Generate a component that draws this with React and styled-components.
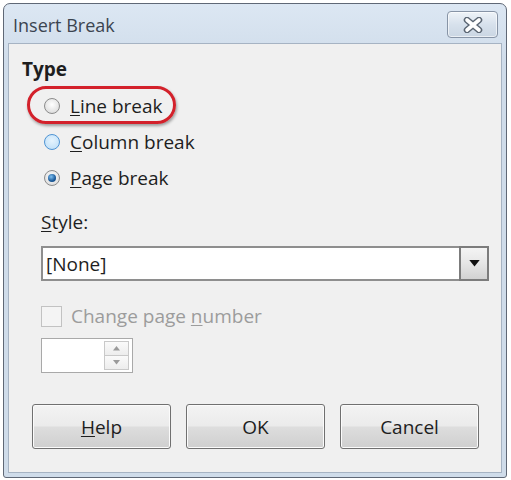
import React from 'react'
import styled, { createGlobalStyle } from 'styled-components'

const Global = createGlobalStyle`
  body {
    margin: 0;
    background: #ffffff;
    font-family: 'Open Sans', 'Noto Sans', sans-serif;
  }
`

const Window = styled.div`
  margin: 3px 0 0 3px;
  width: 504px;
  height: 475px;
  box-sizing: border-box;
  border: 1px solid #5f6876;
  border-radius: 7px 7px 3px 3px;
  background: linear-gradient(#dce7f3, #cfdcea 60px, #cfdcea);
  padding: 0 4px 4px;
  display: flex;
  flex-direction: column;
`

const TitleBar = styled.div`
  height: 39px;
  display: flex;
  align-items: center;
  justify-content: space-between;
  padding: 0 4px 0 5px;
`

const Title = styled.span`
  font-size: 18px;
  color: #3b4450;
  margin-top: 2px;
`

const CloseButton = styled.div`
  width: 49px;
  height: 25px;
  margin-top: 2px;
  border: 1px solid #8794a6;
  border-radius: 4px;
  background: linear-gradient(#eef3f8, #d7e1ec 50%, #cad6e3);
  box-shadow: inset 0 0 0 1px rgba(255, 255, 255, 0.6);
  display: flex;
  align-items: center;
  justify-content: center;
`

const Body = styled.div`
  flex: 1;
  background: #f0f0f0;
  border: 1px solid #a6b3c3;
  padding: 14px 12px 0 13px;
  display: flex;
  flex-direction: column;
  font-size: 19px;
  color: #1e1e1e;
`

const Heading = styled.div`
  font-weight: 700;
  line-height: 22px;
`

const RadioList = styled.div`
  margin-top: 8px;
  padding-left: 22px;
  display: flex;
  flex-direction: column;
`

const RadioRow = styled.div`
  position: relative;
  height: 36px;
  display: flex;
  align-items: center;
  gap: 10px;
`

const Highlight = styled.div`
  position: absolute;
  left: -17px;
  top: -2px;
  width: 149px;
  height: 38px;
  box-sizing: border-box;
  border: 3px solid #d3212b;
  border-radius: 19px;
  box-shadow: 1px 2px 3px rgba(0, 0, 0, 0.35);
  pointer-events: none;
`

const Radio = styled.span`
  width: 16px;
  height: 16px;
  box-sizing: border-box;
  border-radius: 50%;
  border: 1px solid ${p => (p.hover ? '#4f94d4' : '#8b8b8b')};
  background: ${p =>
    p.hover
      ? 'radial-gradient(circle at 50% 40%, #e6f4fe, #b9dcf7)'
      : 'radial-gradient(circle at 50% 40%, #ffffff, #d4d4d4)'};
  display: flex;
  align-items: center;
  justify-content: center;
  &::after {
    content: '';
    display: ${p => (p.checked ? 'block' : 'none')};
    width: 8px;
    height: 8px;
    border-radius: 50%;
    background: radial-gradient(circle at 40% 35%, #7fc0f0, #1b5a9a 60%, #0c3a6a);
  }
`

const Key = styled.span`
  text-decoration: underline;
  text-underline-offset: 2px;
`

const Section = styled.div`
  padding-left: 19px;
  display: flex;
  flex-direction: column;
`

const Label = styled.div`
  margin-top: 15px;
  line-height: 22px;
`

const Select = styled.div`
  margin-top: 13px;
  height: 35px;
  box-sizing: border-box;
  border: 2px solid #8e8e8e;
  border-right-width: 1px;
  background: #ffffff;
  display: flex;
  align-items: stretch;
`

const SelectValue = styled.div`
  flex: 1;
  padding-left: 3px;
  display: flex;
  align-items: center;
`

const DropButton = styled.div`
  width: 26px;
  border: 2px solid #7c7c7c;
  margin: -2px -1px -2px 0;
  background: linear-gradient(#f4f4f4, #e6e6e6 50%, #d2d2d2);
  display: flex;
  align-items: center;
  justify-content: center;
`

const CheckRow = styled.div`
  margin-top: 24px;
  height: 22px;
  display: flex;
  align-items: center;
  gap: 9px;
  color: #9c9c9c;
`

const Checkbox = styled.span`
  width: 21px;
  height: 21px;
  box-sizing: border-box;
  border: 1px solid #c2c2c2;
  background: #f4f4f4;
`

const Spin = styled.div`
  margin-top: 11px;
  width: 92px;
  height: 35px;
  box-sizing: border-box;
  border: 1px solid #a9a9a9;
  background: #ffffff;
  display: flex;
  justify-content: flex-end;
  padding: 2px 3px 2px 0;
`

const SpinButtons = styled.div`
  width: 23px;
  border: 1px solid #c9c9c9;
  display: flex;
  flex-direction: column;
`

const SpinHalf = styled.div`
  flex: 1;
  background: linear-gradient(#fafafa, #ededed);
  display: flex;
  align-items: center;
  justify-content: center;
  & + & {
    border-top: 1px solid #c9c9c9;
  }
`

const Buttons = styled.div`
  margin-top: 31px;
  padding: 0 10px;
  display: grid;
  grid-template-columns: repeat(3, 1fr);
  gap: 15px;
`

const Button = styled.div`
  height: 45px;
  box-sizing: border-box;
  border: 1px solid #707070;
  border-radius: 3px;
  background: linear-gradient(#f3f3f3, #ebebeb 48%, #dddddd 52%, #cfcfcf);
  box-shadow: inset 0 0 0 1px #fbfbfb;
  display: flex;
  align-items: center;
  justify-content: center;
  color: #1e1e1e;
`

const CloseIcon = () => (
  <svg width="22" height="16" viewBox="0 0 22 16">
    <path d="M5 3 L17 13 M17 3 L5 13" stroke="#5a6572" strokeWidth="6.5" strokeLinecap="round" />
    <path d="M5 3 L17 13 M17 3 L5 13" stroke="#ffffff" strokeWidth="3.6" strokeLinecap="round" />
  </svg>
)

const Arrow = ({ up, size = 8, color = '#7a7a7a' }) => (
  <svg width={size} height={size / 2 + 1} viewBox="0 0 8 5">
    <path d={up ? 'M0 5 L4 0 L8 5 Z' : 'M0 0 L8 0 L4 5 Z'} fill={color} />
  </svg>
)

export default function App() {
  return (
    <>
      <Global />
      <Window>
        <TitleBar>
          <Title>Insert Break</Title>
          <CloseButton>
            <CloseIcon />
          </CloseButton>
        </TitleBar>
        <Body>
          <Heading>Type</Heading>
          <RadioList>
            <RadioRow>
              <Radio />
              <span>
                <Key>L</Key>ine break
              </span>
              <Highlight />
            </RadioRow>
            <RadioRow>
              <Radio hover />
              <span>
                <Key>C</Key>olumn break
              </span>
            </RadioRow>
            <RadioRow>
              <Radio checked />
              <span>
                <Key>P</Key>age break
              </span>
            </RadioRow>
          </RadioList>
          <Section>
            <Label>
              <Key>S</Key>tyle:
            </Label>
            <Select>
              <SelectValue>[None]</SelectValue>
              <DropButton>
                <Arrow size={11} color="#111111" />
              </DropButton>
            </Select>
            <CheckRow>
              <Checkbox />
              <span>
                Change page <Key>n</Key>umber
              </span>
            </CheckRow>
            <Spin>
              <SpinButtons>
                <SpinHalf>
                  <Arrow up size={7} color="#9a9a9a" />
                </SpinHalf>
                <SpinHalf>
                  <Arrow size={7} color="#9a9a9a" />
                </SpinHalf>
              </SpinButtons>
            </Spin>
          </Section>
          <Buttons>
            <Button>
              <span>
                <Key>H</Key>elp
              </span>
            </Button>
            <Button>OK</Button>
            <Button>Cancel</Button>
          </Buttons>
        </Body>
      </Window>
    </>
  )
}
